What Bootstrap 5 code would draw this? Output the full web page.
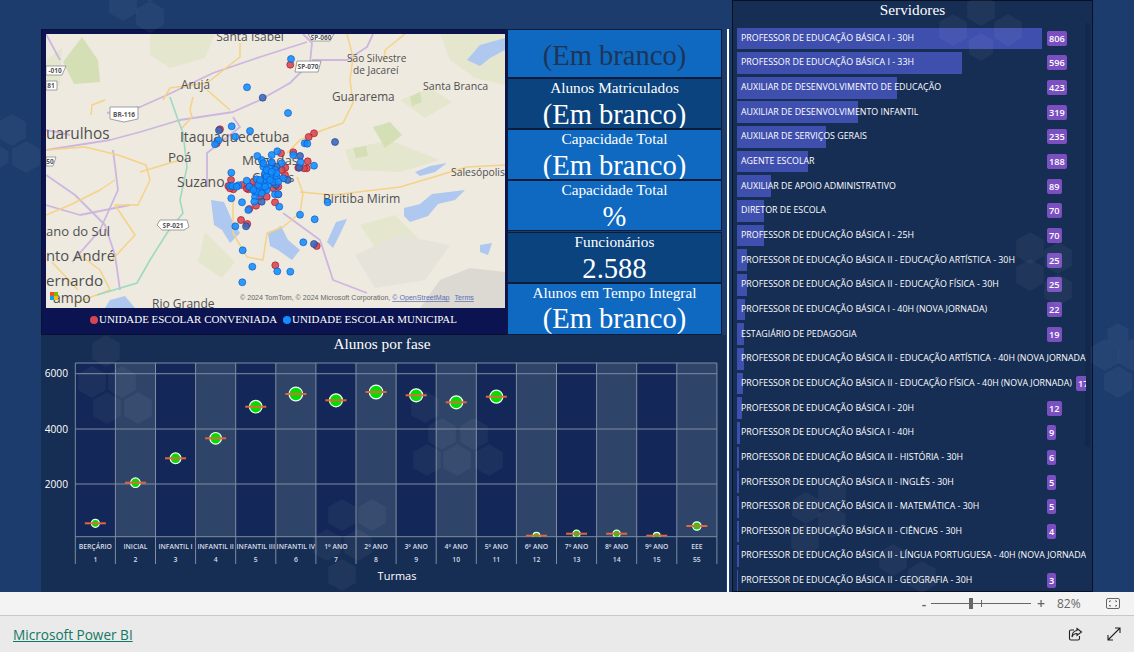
<!DOCTYPE html>
<html lang="pt-BR">
<head>
<meta charset="utf-8">
<title>Microsoft Power BI</title>
<link rel="stylesheet" href="https://cdn.jsdelivr.net/npm/bootstrap@5.3.0/dist/css/bootstrap.min.css">
<style>
html,body{height:652px;overflow:hidden;margin:0}
body{background:#eaeaea;font-family:"Open Sans","Noto Sans",sans-serif}
.serif{font-family:"Liberation Serif","Times New Roman",serif}
.stage{height:592px;background:#1c3c6d;padding-left:41px;position:relative;overflow:hidden}
.hexes{position:absolute;left:0;top:0;width:1134px;height:592px;pointer-events:none;z-index:5}
.leftcol{width:685px;padding-top:29px;flex:none}
.toprow{height:306px}
.mappanel{width:467px;flex:none;background:#0b1451;border:1px solid #0a1030;padding:4px 2px 0 4px}
.mapsvg{display:block;width:459px;height:274px}
.legend{height:26px;color:#fff;font-size:10.95px;padding:0 4px 3px 0}
.legdot{width:8px;height:8px;border-radius:50%;display:inline-block;margin-right:1px}
.legdot-gap{margin-left:6px}
.kpis{width:215px;flex:none;margin-left:-1px}
.kpi{color:#fff;text-align:center;border:1px solid #0c1c38;height:51px;background:#0f69c0;overflow:hidden}
.kpi.darker{background:#0a437e}
.kpi.first{height:49px;padding-top:9px}
.kpi.gap-top{margin-top:1px}
.kpi.tall{height:52px}
.kpi-title{font-size:15.3px;line-height:17px;height:19px}
.kpi-value{font-size:28.6px;line-height:34px;height:34px}
.kpi.first .kpi-value{color:#1d3557}
.kpi.tall .kpi-value{line-height:32px}
.chartpanel{height:257px;background:#162d54;position:relative}
.chartsvg{display:block;width:685px;height:257px}
.vsep{width:2px;height:563px;background:#fff;margin:29px 3px 0 1px;flex:none}
.srv{width:361px;height:592px;flex:none;background:#162d54;border:1px solid #0a0f22;position:relative;overflow:hidden}
.srv-title{color:#fff;font-size:15.3px;line-height:18px;text-align:center;height:25px}
.srv-list{width:349px;margin:0 0 0 4px;padding:0;list-style:none;overflow:hidden}
.srv-row{height:24.67px;position:relative;white-space:nowrap;color:#fff;align-items:center}
.srv-bar{position:absolute;left:0;top:1.5px;height:21.7px;background:#3f4fae}
.srv-label{position:relative;flex:none;min-width:310px;padding-left:4px;font-size:8.85px}
.srv-badge{position:relative;flex:none;background:#7a50c0;border-radius:2px;font-size:9.2px;font-weight:600;line-height:13px;padding:1px 2px;color:#fff}
.srv-track{position:absolute;left:352px;top:22px;width:5px;height:424px;background:#12284d;border-radius:2px}
.zoombar{height:24px;background:#f3f3f3;border-bottom:1px solid #c8c8c8;color:#666;font-size:12px}
.z-btn{font-size:14px;line-height:14px;color:#666;width:10px;text-align:center;font-weight:600}
.z-track{width:100px;height:1px;background:#666;position:relative;margin:0 5px 0 2px}
.z-thumb{position:absolute;left:38px;top:-5px;width:4px;height:11px;background:#666}
.z-tick{position:absolute;left:50px;top:-3px;width:1px;height:7px;background:#666}
.z-pct{width:24px;margin-left:11px;margin-right:25px}
.z-fit{margin-right:14px}
.footbar{height:36px;background:#eaeaea;padding:3px 13px 0 13px}
.foot-icons{margin-top:-3px}
.pbi-link{color:#117865;font-size:13.6px;text-decoration:underline}
</style>
</head>
<body>
<div class="stage d-flex">
  <svg class="hexes" id="hexes" viewBox="0 0 1134 592"></svg>
  <div class="leftcol">
    <div class="toprow d-flex">
      <div class="mappanel d-flex flex-column">
        <svg class="mapsvg" viewBox="46 34 459 274" font-family="'Open Sans','Noto Sans',sans-serif">
          <rect x="46" y="34" width="459" height="274" fill="#eeeae0"/>
          <g fill="#e4e7cd">
            <path d="M150 34 L215 34 L205 58 L170 68 L150 55Z"/>
            <path d="M46 60 L62 48 L60 85 L46 90Z"/>
            <path d="M440 34 L505 34 L505 85 L475 78 L450 60Z"/>
            <path d="M345 150 L390 140 L440 160 L400 172 L352 170Z"/>
            <path d="M400 100 L430 88 L452 102 L425 118Z"/>
            <path d="M205 232 L235 262 L222 278 L198 262Z"/>
            <path d="M360 225 L395 215 L420 240 L385 262Z"/>
          </g>
          <g fill="#d5dfb6">
            <path d="M63 62 L82 37 L98 60 L100 82 L74 84Z"/>
            <path d="M373 127 L390 122 L402 135 L385 148Z"/>
            <path d="M353 148 L366 146 L368 156 L356 158Z"/>
            <path d="M410 97 L420 92 L422 102 L412 106Z"/>
          </g>
          <path d="M420 308 L440 280 L470 268 L505 272 L505 308Z" fill="#dcd9d2"/>
          <path d="M355 255 L400 235 L450 245 L425 280 L375 288Z" fill="#e6e3da"/>
          <g fill="#aec8ef">
            <path d="M211 200 L224 202 L232 220 L240 233 L230 243 L222 230 L214 225Z"/>
            <path d="M268 234 L281 226 L288 240 L300 250 L292 260 L278 250 L270 246Z"/>
            <path d="M404 208 L420 204 L432 194 L465 190 L455 200 L438 204 L428 216 L410 222 L404 216Z"/>
            <path d="M327 242 L336 222 L347 219 L341 232 L333 248Z"/>
            <path d="M415 172 L430 166 L447 163 L435 172 L420 176Z"/>
            <path d="M467 60 L480 45 L505 38 L505 50 L490 58 L480 66Z"/>
            <path d="M480 245 L492 243 L488 255 L480 252Z"/>
            <path d="M110 300 L125 296 L135 308 L105 308Z"/>
          </g>
          <g fill="none" stroke="#cdb6df" stroke-width="1.8" stroke-linejoin="round">
            <path d="M46 150 L110 140 L140 132 L180 120 L233 112 L260 100 L290 83 L310 63 L312 43 L303 34"/>
            <path d="M312 60 L347 60 L367 47 L373 34"/>
            <path d="M46 130 L70 135 M107 113 L140 107 L167 95 L213 73 L260 57 L307 42"/>
            <path d="M233 117 L240 127 L207 153 L207 187"/>
            <path d="M283 213 L320 240 L333 280 L367 293"/>
            <path d="M46 175 L75 195 L105 225 L115 255 L120 290 M113 150 L118 190 L100 230 L72 262"/>
            <path d="M46 205 L80 215 L130 205 M46 34 L60 60"/>
          </g>
          <g fill="none" stroke="#f5d285" stroke-width="1.5" stroke-linejoin="round">
            <path d="M347 34 L353 57 L350 80 L353 103 L343 123 L323 130 L300 140 L287 153"/>
            <path d="M240 43 L240 57 L207 83 L170 88 L163 100 M207 90 L230 110 M193 97 L190 110 L192 117 L182 128"/>
            <path d="M233 200 L233 233 L247 257 L263 260 L267 233 L283 227 L300 213 L303 193 L297 177"/>
            <path d="M300 192 L333 195 L400 187 L447 173 L467 167 L505 165"/>
            <path d="M91 115 L92 105 L105 100 M46 150 L85 147 L118 155 L146 165 L150 180 L138 205 L115 205 L135 235 L110 262"/>
            <path d="M46 215 L70 205 L100 190 L115 180 M52 262 L78 290 M80 255 L100 270 L110 290 L75 303 M140 172 L180 160"/>
            <path d="M405 34 L385 50 L384 60"/>
          </g>
          <path d="M170 97 L177 117 L183 133 L187 167 L180 200 L183 213 L167 233 L150 260 L137 283 L97 295" fill="none" stroke="#9edabf" stroke-width="1.6"/>
          <g fill="#fff" stroke="#8a8a8a" stroke-width=".8">
            <path d="M308 34 L334 34 L330 41 L312 41Z"/>
            <path d="M297 61 L321 61 L318 72 L295 72Z"/>
            <path d="M46 66 L66 66 L62 75 L46 75Z"/>
            <path d="M46 81 L57 81 L57 90 L46 90Z"/>
            <path d="M110 107 L138 107 L138 119 L124 122 L110 119Z"/>
            <path d="M160 220 L187 220 L189 227 L184 230 L162 230 L157 225Z"/>
            <path d="M46 157 L56 157 L53 166 L46 166Z"/>
          </g>
          <g fill="#555" font-size="6.5" font-weight="700" text-anchor="middle">
            <text x="321" y="39.500">SP-060</text><text x="308" y="68.500">SP-070</text><text x="55" y="73">-010</text><text x="51" y="88">81</text><text x="124" y="117">BR-116</text><text x="173" y="227.500">SP-021</text><text x="50" y="164">50</text>
          </g>
          <g fill="#505050">
            <text x="250" y="41" font-size="12" text-anchor="middle">Santa Isabel</text>
            <text x="347" y="62" font-size="10.100">São Silvestre</text>
            <text x="353" y="74" font-size="10.100">de Jacareí</text>
            <text x="181" y="89" font-size="11.800">Arujá</text>
            <text x="332" y="101" font-size="11.800">Guararema</text>
            <text x="423" y="90" font-size="10.600">Santa Branca</text>
            <text x="46" y="139" font-size="15.400">uarulhos</text>
            <text x="180" y="142" font-size="13.800">Itaquaquecetuba</text>
            <text x="168" y="162" font-size="13.400">Poá</text>
            <text x="177" y="187" font-size="14">Suzano</text>
            <text x="242" y="165" font-size="13.400">Mogi das</text>
            <text x="252" y="182" font-size="13.400">Cruzes</text>
            <text x="451" y="176" font-size="10.400">Salesópolis</text>
            <text x="323" y="203" font-size="12.200">Biritiba Mirim</text>
            <text x="46" y="236" font-size="13">ano do Sul</text>
            <text x="46" y="261" font-size="14.800">nto André</text>
            <text x="46" y="286" font-size="15.200">ernardo</text>
            <text x="53" y="303" font-size="14">ampo</text>
            <text x="152" y="307.500" font-size="12">Rio Grande</text>
          </g>
          <g id="dots"></g>
          <g transform="translate(50,292)"><rect width="4" height="4" fill="#f25022"/><rect x="4" width="4" height="4" fill="#7fba00"/><rect y="4" width="4" height="4" fill="#00a4ef"/><rect x="4" y="4" width="4" height="4" fill="#ffb900"/></g>
          <text x="240" y="300" font-family="'Liberation Sans',sans-serif" font-size="7.1" fill="#666">© 2024 TomTom, © 2024 Microsoft Corporation, <tspan fill="#5a6fb8" text-decoration="underline">© OpenStreetMap</tspan><tspan dx="5" fill="#5a6fb8" text-decoration="underline">Terms</tspan></text>
        </svg>
        <div class="legend serif d-flex align-items-center justify-content-center">
          <span class="legdot" style="background:#d64550"></span><span>UNIDADE ESCOLAR CONVENIADA</span>
          <span class="legdot legdot-gap" style="background:#118dff"></span><span>UNIDADE ESCOLAR MUNICIPAL</span>
        </div>
      </div>
      <div class="kpis d-flex flex-column serif">
        <div class="kpi first"><div class="kpi-value">(Em branco)</div></div>
        <div class="kpi darker"><div class="kpi-title">Alunos Matriculados</div><div class="kpi-value">(Em branco)</div></div>
        <div class="kpi"><div class="kpi-title">Capacidade Total</div><div class="kpi-value">(Em branco)</div></div>
        <div class="kpi"><div class="kpi-title">Capacidade Total</div><div class="kpi-value">%</div></div>
        <div class="kpi darker gap-top"><div class="kpi-title">Funcionários</div><div class="kpi-value">2.588</div></div>
        <div class="kpi tall"><div class="kpi-title">Alunos em Tempo Integral</div><div class="kpi-value">(Em branco)</div></div>
      </div>
    </div>
    <div class="chartpanel">
      <svg class="chartsvg" id="chart" viewBox="41 335 685 257"></svg>
    </div>
  </div>
  <div class="vsep"></div>
  <div class="srv">
    <div class="srv-title serif">Servidores</div>
    <div class="srv-track"></div>
    <ul class="srv-list">
      <li class="srv-row d-flex"><span class="srv-bar" style="width:305px"></span><span class="srv-label">PROFESSOR DE EDUCAÇÃO BÁSICA I - 30H</span><span class="srv-badge">806</span></li>
      <li class="srv-row d-flex"><span class="srv-bar" style="width:225px"></span><span class="srv-label">PROFESSOR DE EDUCAÇÃO BÁSICA I - 33H</span><span class="srv-badge">596</span></li>
      <li class="srv-row d-flex"><span class="srv-bar" style="width:160px"></span><span class="srv-label">AUXILIAR DE DESENVOLVIMENTO DE EDUCAÇÃO</span><span class="srv-badge">423</span></li>
      <li class="srv-row d-flex"><span class="srv-bar" style="width:120.6px"></span><span class="srv-label">AUXILIAR DE DESENVOLVIMENTO INFANTIL</span><span class="srv-badge">319</span></li>
      <li class="srv-row d-flex"><span class="srv-bar" style="width:88.8px"></span><span class="srv-label">AUXILIAR DE SERVIÇOS GERAIS</span><span class="srv-badge">235</span></li>
      <li class="srv-row d-flex"><span class="srv-bar" style="width:71px"></span><span class="srv-label">AGENTE ESCOLAR</span><span class="srv-badge">188</span></li>
      <li class="srv-row d-flex"><span class="srv-bar" style="width:33.6px"></span><span class="srv-label">AUXILIAR DE APOIO ADMINISTRATIVO</span><span class="srv-badge">89</span></li>
      <li class="srv-row d-flex"><span class="srv-bar" style="width:26.5px"></span><span class="srv-label">DIRETOR DE ESCOLA</span><span class="srv-badge">70</span></li>
      <li class="srv-row d-flex"><span class="srv-bar" style="width:26.5px"></span><span class="srv-label">PROFESSOR DE EDUCAÇÃO BÁSICA I - 25H</span><span class="srv-badge">70</span></li>
      <li class="srv-row d-flex"><span class="srv-bar" style="width:9.5px"></span><span class="srv-label">PROFESSOR DE EDUCAÇÃO BÁSICA II - EDUCAÇÃO ARTÍSTICA - 30H</span><span class="srv-badge">25</span></li>
      <li class="srv-row d-flex"><span class="srv-bar" style="width:9.5px"></span><span class="srv-label">PROFESSOR DE EDUCAÇÃO BÁSICA II - EDUCAÇÃO FÍSICA - 30H</span><span class="srv-badge">25</span></li>
      <li class="srv-row d-flex"><span class="srv-bar" style="width:8.3px"></span><span class="srv-label">PROFESSOR DE EDUCAÇÃO BÁSICA I - 40H (NOVA JORNADA)</span><span class="srv-badge">22</span></li>
      <li class="srv-row d-flex"><span class="srv-bar" style="width:7.2px"></span><span class="srv-label">ESTAGIÁRIO DE PEDAGOGIA</span><span class="srv-badge">19</span></li>
      <li class="srv-row d-flex"><span class="srv-bar" style="width:6.8px"></span><span class="srv-label">PROFESSOR DE EDUCAÇÃO BÁSICA II - EDUCAÇÃO ARTÍSTICA - 40H (NOVA JORNADA)</span><span class="srv-badge ms-1">18</span></li>
      <li class="srv-row d-flex"><span class="srv-bar" style="width:6.4px"></span><span class="srv-label">PROFESSOR DE EDUCAÇÃO BÁSICA II - EDUCAÇÃO FÍSICA - 40H (NOVA JORNADA)</span><span class="srv-badge ms-1">17</span></li>
      <li class="srv-row d-flex"><span class="srv-bar" style="width:4.5px"></span><span class="srv-label">PROFESSOR DE EDUCAÇÃO BÁSICA I - 20H</span><span class="srv-badge">12</span></li>
      <li class="srv-row d-flex"><span class="srv-bar" style="width:3.4px"></span><span class="srv-label">PROFESSOR DE EDUCAÇÃO BÁSICA I - 40H</span><span class="srv-badge">9</span></li>
      <li class="srv-row d-flex"><span class="srv-bar" style="width:2.3px"></span><span class="srv-label">PROFESSOR DE EDUCAÇÃO BÁSICA II - HISTÓRIA - 30H</span><span class="srv-badge">6</span></li>
      <li class="srv-row d-flex"><span class="srv-bar" style="width:1.9px"></span><span class="srv-label">PROFESSOR DE EDUCAÇÃO BÁSICA II - INGLÊS - 30H</span><span class="srv-badge">5</span></li>
      <li class="srv-row d-flex"><span class="srv-bar" style="width:1.9px"></span><span class="srv-label">PROFESSOR DE EDUCAÇÃO BÁSICA II - MATEMÁTICA - 30H</span><span class="srv-badge">5</span></li>
      <li class="srv-row d-flex"><span class="srv-bar" style="width:1.5px"></span><span class="srv-label">PROFESSOR DE EDUCAÇÃO BÁSICA II - CIÊNCIAS - 30H</span><span class="srv-badge">4</span></li>
      <li class="srv-row d-flex"><span class="srv-bar" style="width:1.5px"></span><span class="srv-label">PROFESSOR DE EDUCAÇÃO BÁSICA II - LÍNGUA PORTUGUESA - 40H (NOVA JORNADA)</span><span class="srv-badge ms-1">4</span></li>
      <li class="srv-row d-flex"><span class="srv-bar" style="width:1.2px"></span><span class="srv-label">PROFESSOR DE EDUCAÇÃO BÁSICA II - GEOGRAFIA - 30H</span><span class="srv-badge">3</span></li>
    </ul>
  </div>
</div>
<div class="zoombar d-flex align-items-center justify-content-end">
  <span class="z-btn">-</span>
  <div class="z-track"><span class="z-thumb"></span><span class="z-tick"></span></div>
  <span class="z-btn">+</span>
  <span class="z-pct">82%</span>
  <svg class="z-fit" width="14" height="11" viewBox="0 0 14 11" fill="none" stroke="#666"><rect x=".5" y=".5" width="13" height="10" rx="1.5"/><path d="M3.5 4V3H5M9 3h1.500v1M10.500 7v1H9M5 8H3.500V7"/></svg>
</div>
<div class="footbar d-flex align-items-center justify-content-between">
  <a class="pbi-link" href="#">Microsoft Power BI</a>
  <div class="foot-icons d-flex align-items-center gap-4">
    <svg width="15" height="15" viewBox="0 0 15 15" fill="none" stroke="#222" stroke-width="1.1"><path d="M6 3H3A1.500 1.500 0 0 0 1.500 4.500v7A1.500 1.500 0 0 0 3 13h7a1.500 1.500 0 0 0 1.500-1.500V9"/><path d="M9 1.500l4.500 3.500L9 8.500V6.500C6.500 6.500 5 7.500 4 10c0-3.500 1.500-6 5-6.500z"/></svg>
    <svg width="14" height="14" viewBox="0 0 14 14" fill="none" stroke="#222" stroke-width="1.100"><path d="M1 13L13 1M8 1h5v5M1 8v5h5"/></svg>
  </div>
</div>
<script src="https://cdn.jsdelivr.net/npm/bootstrap@5.3.0/dist/js/bootstrap.bundle.min.js"></script>
<script>
var NS='http://www.w3.org/2000/svg';
function add(p,n,a,t){var e=document.createElementNS(NS,n);for(var k in a)e.setAttribute(k,a[k]);if(t!=null)e.textContent=t;p.appendChild(e);return e;}
/* hexagon watermark */
var hx=[[123,5,16],[150,17,16],[150,-10,12],[12,130,16],[26,157,16],[-2,157,12],[106,351,16],[92,382,16],[122,382,16],[107,408,16],[138,408,16],[342,515,16],[372,515,16],[327,545,16],[358,545,16],[342,575,16],[425,407,16],[442,434,16],[474,434,16],[427,460,16],[457,460,16],[489,460,16],[953,30,16],[981,10,16],[1008,30,16],[981,47,14],[1030,248,16],[1058,258,16],[1030,275,16],[1058,290,16],[806,508,16],[832,493,16],[832,522,16],[805,540,16],[893,560,16],[922,577,16],[1118,382,16],[1105,355,16],[1132,355,16],[1118,335,12]];
var hs=document.getElementById('hexes');
hx.forEach(function(h){var p=[],i;for(i=0;i<6;i++){var a=Math.PI/3*i+Math.PI/6;p.push((h[0]+h[2]*Math.cos(a)).toFixed(1)+','+(h[1]+h[2]*Math.sin(a)).toFixed(1));}add(hs,'polygon',{points:p.join(' '),fill:'#fff','fill-opacity':.045});});
/* map points, coordinates in thirds of a page pixel */
var red=[[871,194],[660,388],[942,400],[926,411],[650,430],[880,457],[843,460],[923,484],[920,505],[895,503],[856,503],[693,540],[825,607],[768,617],[723,660],[742,672],[950,738],[826,796],[748,627],[685,558],[700,568],[745,568],[770,552],[820,565],[835,560],[835,583],[855,525],[760,545],[740,565],[780,590],[800,590],[725,555],[912,505],[690,565],[845,510]];
var blue=[[873,177],[741,262],[864,339],[695,379],[750,393],[706,410],[655,421],[645,433],[914,430],[922,431],[942,497],[694,518],[694,595],[726,607],[745,630],[838,620],[983,607],[900,644],[944,658],[706,679],[910,727],[728,751],[757,800],[832,814],[871,815],[727,847],[690,558],[697,558],[715,556],[710,560],[740,542],[748,560],[770,538],[765,575],[765,590],[763,605],[790,570],[800,570],[787,545],[800,545],[815,530],[830,530],[850,535],[795,520],[810,505],[825,510],[790,500],[785,480],[815,487],[845,490],[772,468],[815,465],[832,454],[880,465],[902,487],[825,583],[835,583],[780,560],[770,575],[785,580],[775,555],[805,555],[820,545],[835,545],[800,530],[790,490],[800,510],[830,520],[815,515],[760,570],[780,540],[795,560],[810,540]];
var dark=[[788,293],[657,391],[1005,426],[738,679],[942,732],[785,605],[863,540],[900,468],[898,503],[748,560],[830,500],[815,490],[795,525],[828,555]];
var g=document.getElementById('dots');
function dot(c,f,s){add(g,'circle',{cx:(c[0]/3).toFixed(1),cy:(c[1]/3).toFixed(1),r:3.5,fill:f,'fill-opacity':.88,stroke:s,'stroke-opacity':.8,'stroke-width':.8});}
red.forEach(function(c){dot(c,'#d64550','#a8101c');});
dark.forEach(function(c){dot(c,'#3a66b8','#123f96');});
blue.forEach(function(c){dot(c,'#118dff','#0b58c4');});
/* chart */
var ch=document.getElementById('chart'),x0=75.3,w=40.1,top0=363,bot=536.7;
var names=['BERÇÁRIO','INICIAL','INFANTIL I','INFANTIL II','INFANTIL III','INFANTIL IV','1º ANO','2º ANO','3º ANO','4º ANO','5º ANO','6º ANO','7º ANO','8º ANO','9º ANO','EEE'];
var nums=[1,2,3,4,5,6,7,8,9,10,11,12,13,14,15,55];
var ys=[523.3,482.7,458.3,438.3,406.7,394,400.3,392,395.3,402.3,396.7,535.7,533.7,533.7,535.7,526];
var rs=[4,4.8,5.4,5.8,6.3,6.8,6.5,6.8,6.5,6.5,6.5,3.4,3.6,3.6,3.4,4.2];
var f="'Open Sans','Noto Sans',sans-serif";
var clip=add(add(ch,'defs',{}),'clipPath',{id:'plotclip'});add(clip,'rect',{x:x0,y:top0,width:w*16,height:bot-top0});
add(ch,'rect',{x:x0,y:top0,width:w*16,height:bot-top0,fill:'#132858'});
var i;
for(i=1;i<16;i+=2)add(ch,'rect',{x:x0+i*w,y:top0,width:w,height:bot-top0,fill:'#2f4469'});
[373.7,429,484].forEach(function(y){add(ch,'line',{x1:x0,x2:x0+16*w,y1:y,y2:y,stroke:'#7f8ca2','stroke-width':1});});
for(i=0;i<=16;i++)add(ch,'line',{x1:x0+i*w,x2:x0+i*w,y1:top0,y2:564,stroke:'#7f8ca2','stroke-width':1});
add(ch,'line',{x1:x0,x2:x0+16*w,y1:top0,y2:top0,stroke:'#7f8ca2','stroke-width':1});
add(ch,'line',{x1:x0,x2:x0+16*w,y1:bot,y2:bot,stroke:'#7f8ca2','stroke-width':1});
[['6000',373.7],['4000',429],['2000',484]].forEach(function(t){add(ch,'text',{x:68,y:t[1]+3.6,fill:'#fff','font-family':f,'font-size':10.2,'text-anchor':'end'},t[0]);});
var marks=add(ch,'g',{'clip-path':'url(#plotclip)'});
for(i=0;i<16;i++){var cx=x0+(i+.5)*w;
 add(marks,'circle',{cx:cx,cy:ys[i],r:rs[i],fill:'#00e000',stroke:'#fff','stroke-width':1.2});
 add(marks,'rect',{x:cx-10.5,y:ys[i]-1,width:21,height:2,fill:'#e0693a'});
 add(ch,'text',{x:cx,y:549,fill:'#d8dde6','font-family':f,'font-size':6.8,'font-weight':600,'text-anchor':'middle'},names[i]);
 add(ch,'text',{x:cx,y:562,fill:'#d8dde6','font-family':f,'font-size':6.8,'font-weight':600,'text-anchor':'middle'},nums[i]);
}
add(ch,'text',{x:397,y:580,fill:'#fff','font-family':f,'font-size':11,'text-anchor':'middle'},'Turmas');
add(ch,'text',{x:382,y:349,fill:'#fff','font-family':"'Liberation Serif',serif",'font-size':15.3,'text-anchor':'middle'},'Alunos por fase');
</script>
</body>
</html>
